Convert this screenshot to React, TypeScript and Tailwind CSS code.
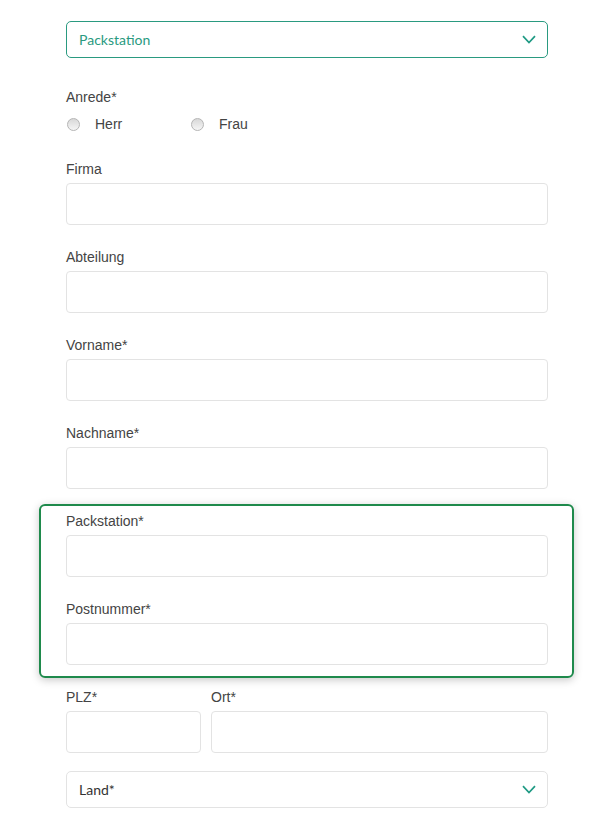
import React from "react";

const Chevron = () => (
  <svg width="14" height="9" viewBox="0 0 14 9" fill="none">
    <path d="M1 1.2 L7 7.5 L13 1.2" stroke="#1f9a84" strokeWidth="1.7" />
  </svg>
);

const Label = ({ children }: { children: React.ReactNode }) => (
  <div className="text-[14px] leading-[20px] text-[#444] mb-[4px]" style={{ fontFamily: '"Liberation Sans", Arial, sans-serif' }}>
    {children}
  </div>
);

const Input = ({ className = "" }: { className?: string }) => (
  <div className={`h-[42px] rounded-[4px] border border-[#e3e3e3] bg-white ${className}`} />
);

const Field = ({ label, className = "" }: { label: string; className?: string }) => (
  <div className={className}>
    <Label>{label}</Label>
    <Input />
  </div>
);

const Radio = ({ label }: { label: string }) => (
  <div className="flex items-center h-[20px]">
    <span className="w-[13px] h-[13px] rounded-full border border-[#b5b5b5] bg-gradient-to-b from-[#d8d8d8] to-[#f6f6f6] ml-[1px]" />
    <span className="ml-[15px] text-[14px] text-[#444]" style={{ fontFamily: '"Liberation Sans", Arial, sans-serif' }}>{label}</span>
  </div>
);

export default function App() {
  return (
    <div className="w-[612px] min-h-[824px] bg-white">
      <div className="ml-[66px] w-[482px] pt-[21px] pb-[17px]">
        <div className="h-[37px] rounded-[5px] border border-[#2a9a80] flex items-center justify-between pl-[12px] pr-[11px]">
          <span className="text-[14px] text-[#2a9a80]" style={{ fontFamily: 'Lato, sans-serif' }}>Packstation</span>
          <Chevron />
        </div>

        <div className="mt-[29px]">
          <div className="text-[14px] leading-[20px] text-[#444]" style={{ fontFamily: '"Liberation Sans", Arial, sans-serif' }}>Anrede*</div>
          <div className="flex mt-[7px]">
            <div className="w-[124px]"><Radio label="Herr" /></div>
            <Radio label="Frau" />
          </div>
        </div>

        <Field label="Firma" className="mt-[25px]" />
        <Field label="Abteilung" className="mt-[22px]" />
        <Field label="Vorname*" className="mt-[22px]" />
        <Field label="Nachname*" className="mt-[22px]" />

        <div className="mt-[15px] -ml-[27px] -mr-[26px] border-2 border-[#1f8a4c] rounded-[6px] shadow-[0_2px_8px_rgba(0,0,0,0.22)] pl-[25px] pr-[24px] pt-[5px] pb-[11px]">
          <Field label="Packstation*" />
          <Field label="Postnummer*" className="mt-[22px]" />
        </div>

        <div className="mt-[9px] flex gap-[10px]">
          <Field label="PLZ*" className="w-[135px]" />
          <Field label="Ort*" className="flex-1" />
        </div>

        <div className="mt-[18px] h-[37px] rounded-[5px] border border-[#e3e3e3] flex items-center justify-between pl-[12px] pr-[11px]">
          <span className="text-[14px] text-[#333]" style={{ fontFamily: 'Lato, sans-serif' }}>Land*</span>
          <Chevron />
        </div>
      </div>
    </div>
  );
}
